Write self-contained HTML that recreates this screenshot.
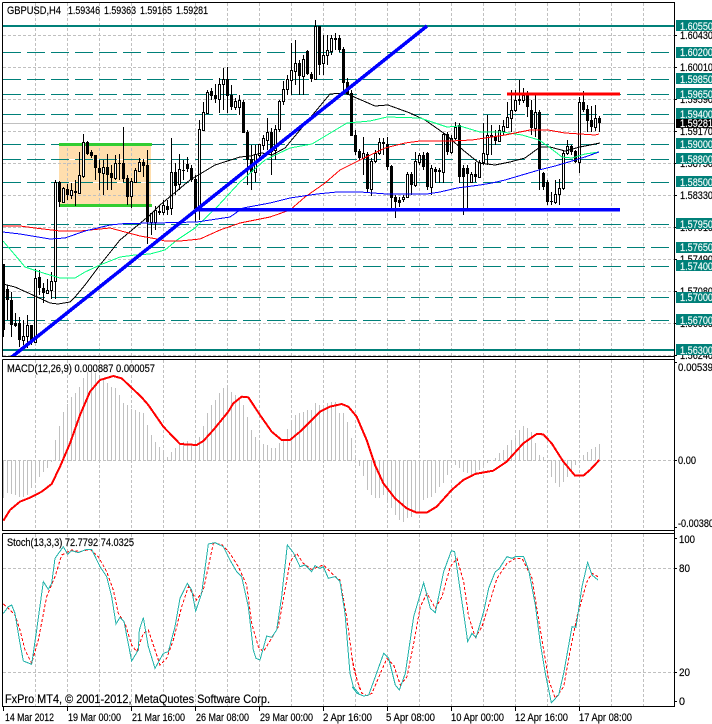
<!DOCTYPE html>
<html><head><meta charset="utf-8"><title>GBPUSD,H4</title>
<style>
html,body{margin:0;padding:0;background:#fff;width:712px;height:724px;overflow:hidden}
svg{display:block}
text{font-family:"Liberation Sans",sans-serif;font-size:11px;fill:#000;stroke:#000;stroke-width:.18px}
.l text{fill:#f2fbfa;stroke:#f2fbfa}
.g{stroke:#c0c0c0;stroke-width:1;stroke-dasharray:3 2;fill:none}
.t{stroke:#008079;stroke-width:1;stroke-dasharray:18 6}
.m{fill:none;stroke-width:1}
polyline{shape-rendering:crispEdges}
</style></head><body>
<svg width="712" height="724" viewBox="0 0 712 724" xmlns="http://www.w3.org/2000/svg">
<defs>
<clipPath id="c1"><rect x="3" y="3" width="671" height="353"/></clipPath>
<clipPath id="c2"><rect x="3" y="360" width="671" height="170"/></clipPath>
<clipPath id="c3"><rect x="3" y="534" width="671" height="172"/></clipPath>
</defs>
<rect width="712" height="724" fill="#fff"/>

<!-- main chart -->
<g clip-path="url(#c1)">
<rect x="59" y="144" width="92" height="61" fill="#ffdead"/>
<path d="M59 159.500H151M59 182.500H151" stroke="#fff" shape-rendering="crispEdges"/>
<g shape-rendering="crispEdges">
<path class="g" d="M35.500 3V356M67.500 3V356M99.500 3V356M131.500 3V356M163.500 3V356M195.500 3V356M227.500 3V356M259.500 3V356M291.500 3V356M323.500 3V356M355.500 3V356M387.500 3V356M419.500 3V356M451.500 3V356M483.500 3V356M515.500 3V356M547.500 3V356M579.500 3V356M611.500 3V356M643.500 3V356"/>
<path class="g" d="M3 35.500H674M3 67.500H674M3 99.500H674M3 131.500H674M3 163.500H674M3 195.500H674M3 227.500H674M3 259.500H674M3 291.500H674M3 323.500H674M3 355.500H674"/>
<path d="M3 123.500H674" stroke="#c0c0c0"/>
<path class="t" d="M3 52.500H674M3 79.500H674M3 94.500H674M3 114.500H674M3 144.500H674M3 159.500H674M3 182.500H674M3 224.500H674M3 247.500H674M3 266.500H674M3 297.500H674M3 320.500H674"/>
<path d="M3 26H674M3 350H674" stroke="#008079" stroke-width="2"/>
<path d="M59 144.500H152M59 205.500H152" stroke="#32cd32" stroke-width="3"/>
<!-- wicks -->
<path stroke="#000" stroke-width="1" d="M3.500 264V337M7.500 285V320M11.500 292V337M15.500 313V327M19.500 317V347M23.500 320V345M27.500 315V348M31.500 325V345M35.500 269V343M39.500 270V295M43.500 283V303M47.500 279V294M51.500 272V299M55.500 180V299M59.500 181V207M63.500 187V203M67.500 184V200M71.500 183V199M75.500 180V206M79.500 152V194M83.500 134V178M87.500 141V155M91.500 150V158M95.500 155V180M99.500 160V190M103.500 160V195M107.500 154V190M111.500 165V190M115.500 155V180M119.500 154V180M123.500 127V182M127.500 175V205M131.500 178V208M135.500 168V183M139.500 158V172M143.500 159V177M147.500 150V244M151.500 213V235M155.500 206V230M159.500 205V215M163.500 200V215M167.500 200V215M171.500 138V215M175.500 163V195M179.500 154V190M183.500 160V180M187.500 157V172M191.500 165V182M195.500 175V222M199.500 120V220M203.500 102V130M207.500 90V113M211.500 88V100M215.500 84V103M219.500 78V113M223.500 68V110M227.500 67V113M231.500 85V110M235.500 98V110M239.500 95V115M243.500 100V133M247.500 130V185M251.500 145V190M255.500 145V182M259.500 144V160M263.500 135V150M267.500 118V150M271.500 128V175M275.500 125V160M279.500 100V132M283.500 81V105M287.500 75V95M291.500 43V95M295.500 40V85M299.500 60V95M303.500 55V95M307.500 50V75M311.500 72V82M315.500 20V80M319.500 26V75M323.500 35V75M327.500 35V65M331.500 35V55M335.500 33V50M339.500 35V52M343.500 47V93M347.500 78V95M351.500 90V136M355.500 130V155M359.500 149V160M363.500 137V175M367.500 152V192M371.500 158V196M375.500 150V163M379.500 138V155M383.500 138V155M387.500 137V170M391.500 165V208M395.500 195V218M399.500 197V207M403.500 195V202M407.500 172V198M411.500 172V195M415.500 152V187M419.500 153V165M423.500 152V170M427.500 152V190M431.500 165V195M435.500 167V183M439.500 168V183M443.500 133V183M447.500 132V155M451.500 135V154M455.500 122V140M459.500 123V183M463.500 165V215M467.500 165V208M471.500 172V183M475.500 162V182M479.500 160V178M483.500 123V165M487.500 115V165M491.500 125V155M495.500 130V145M499.500 125V142M503.500 120V135M507.500 102V128M511.500 90V132M515.500 90V112M519.500 80V105M523.500 88V103M527.500 91V117M531.500 100V135M535.500 94V137M539.500 110V190M543.500 172V190M547.500 180V205M551.500 192V205M555.500 180V204M559.500 179V205M563.500 150V190M567.500 140V155M571.500 145V155M575.500 150V163M579.500 97V173M583.500 91V112M587.500 105V132M591.500 106V132M595.500 105V131M599.500 116V132"/>
<!-- bodies -->
<path stroke="#000" stroke-width="3" d="M3.500 264V330M7.500 289V300M11.500 300V325M15.500 323V326M19.500 323V340M23.500 336V341M27.500 325V337M31.500 325V342M35.500 278V343M39.500 277V288M43.500 288V293M47.500 290V294M51.500 281V291M55.500 182V282M59.500 182V202M63.500 188V203M67.500 189V195M71.500 190V196M75.500 191V193M79.500 175V194M83.500 142V177M87.500 142V154M91.500 152V156M95.500 155V168M99.500 168V173M103.500 167V174M107.500 167V175M111.500 173V178M115.500 163V179M119.500 163V164M123.500 163V179M127.500 178V197M131.500 181V197M135.500 170V183M139.500 162V172M143.500 162V166M147.500 165V222M151.500 213V223M155.500 210V223M159.500 211V213M163.500 205V213M167.500 206V210M171.500 172V209M175.500 172V186M179.500 169V185M183.500 170V171M187.500 164V169M191.500 168V180M195.500 179V209M199.500 129V210M203.500 112V131M207.500 92V114M211.500 91V96M215.500 95V99M219.500 84V100M223.500 79V85M227.500 79V96M231.500 95V107M235.500 101V108M239.500 100V108M243.500 102V133M247.500 132V160M251.500 159V172M255.500 154V173M259.500 144V156M263.500 138V146M267.500 132V141M271.500 132V152M275.500 129V151M279.500 101V130M283.500 89V102M287.500 79V90M291.500 70V81M295.500 63V72M299.500 63V76M303.500 59V77M307.500 51V74M311.500 74V79M315.500 26V80M319.500 26V65M323.500 55V64M327.500 50V56M331.500 38V52M335.500 38V40M339.500 38V50M343.500 49V83M347.500 82V94M351.500 93V136M355.500 135V152M359.500 151V158M363.500 153V159M367.500 154V189M371.500 161V190M375.500 153V162M379.500 142V154M383.500 142V144M387.500 144V167M391.500 166V198M395.500 197V202M399.500 200V203M403.500 197V200M407.500 174V198M411.500 174V185M415.500 161V186M419.500 155V163M423.500 155V167M427.500 153V187M431.500 168V188M435.500 169V172M439.500 170V172M443.500 134V173M447.500 134V152M451.500 138V153M455.500 127V139M459.500 125V177M463.500 168V177M467.500 168V174M471.500 174V183M475.500 174V177M479.500 162V178M483.500 153V163M487.500 135V155M491.500 135V137M495.500 136V141M499.500 130V142M503.500 126V132M507.500 117V128M511.500 110V119M515.500 100V111M519.500 99V101M523.500 95V101M527.500 93V107M531.500 110V128M535.500 112V129M539.500 112V169M543.500 173V187M547.500 182V202M551.500 201V202M555.500 194V203M559.500 188V195M563.500 153V189M567.500 146V154M571.500 146V152M575.500 151V162M579.500 102V163M583.500 102V110M587.500 109V121M591.500 120V127M595.500 118V128M599.500 118V123"/>
<!-- white candle interiors -->
<path stroke="#fff" stroke-width="1" d="M23.500 337V340M27.500 326V336M35.500 279V342M47.500 291V293M51.500 282V290M55.500 183V281M63.500 189V202M71.500 191V195M79.500 176V193M83.500 143V176M103.500 168V173M115.500 164V178M131.500 182V196M135.500 171V182M139.500 163V171M151.500 214V222M155.500 211V222M163.500 206V212M171.500 173V208M179.500 170V184M199.500 130V209M203.500 113V130M207.500 93V113M219.500 85V99M223.500 80V84M235.500 102V107M239.500 101V107M255.500 155V172M259.500 145V155M263.500 139V145M267.500 133V140M275.500 130V150M279.500 102V129M283.500 90V101M287.500 80V89M291.500 71V80M295.500 64V71M303.500 60V76M315.500 27V79M323.500 56V63M327.500 51V55M331.500 39V51M363.500 154V158M371.500 162V189M375.500 154V161M379.500 143V153M403.500 198V199M407.500 175V197M415.500 162V185M419.500 156V162M431.500 169V187M443.500 135V172M451.500 139V152M455.500 128V138M471.500 175V182M479.500 163V177M483.500 154V162M487.500 136V154M499.500 131V141M503.500 127V131M507.500 118V127M511.500 111V118M515.500 101V110M523.500 96V100M535.500 113V128M555.500 195V202M559.500 189V194M563.500 154V188M567.500 147V153M579.500 103V162M595.500 119V127"/>
</g>
<!-- moving averages -->
<polyline class="m" stroke="#000" points="3,284 15,287 35,296 50,303 58,304 70,302 75,297 85,285 100,265 120,240 150,215 160,205 190,180 215,165 240,157 250,156 262,153 272,155 285,148 300,130 330,94 345,93 375,106 388,105 410,113 425,120 445,134 463,150 479,163 495,165 510,162 525,158 540,147 550,147 565,151 580,147 590,145 600,143"/>
<polyline class="m" stroke="#00ff7f" points="3,241 15,255 25,267 40,272 60,278 75,278 85,272 100,265 120,257 135,255 150,254 165,250 177,240 195,228 217,207 240,182 265,160 290,148 312,144 347,123 370,121 387,117 420,118 447,127 460,126 480,132 502,132 522,135 539,140 549,147 562,157 572,158 585,154 599,152"/>
<polyline class="m" stroke="#f00" points="3,226 20,226 35,228 60,231 80,231 110,228 125,232 140,236 157,239 165,241 180,241 200,239 220,230 240,223 270,217 290,210 305,197 325,183 340,170 360,160 385,148 405,143 420,141 450,141 472,140 505,135 530,130 548,130 565,133 580,134 595,135 599,134"/>
<polyline class="m" stroke="#00f" points="3,232 20,234 50,239 65,238 85,231 110,225 125,223.500 155,223 197,222 230,217 243,208 270,203 290,198 317,194 337,192 360,192 373,193 387,194 427,194 440,192 457,188 480,185 492,183 505,180 522,175 539,170 555,166 572,161 585,157 599,152"/>
<!-- trend lines -->
<path d="M8 360L427 26" stroke="#00f" stroke-width="3.500" fill="none" shape-rendering="crispEdges"/>
<path d="M195 209.500H620" stroke="#00f" stroke-width="3.500" shape-rendering="crispEdges"/>
<path d="M507 94H620" stroke="#f00" stroke-width="3" shape-rendering="crispEdges"/>
</g>

<!-- MACD -->
<g clip-path="url(#c2)">
<g shape-rendering="crispEdges">
<path class="g" d="M35.500 360V530M67.500 360V530M99.500 360V530M131.500 360V530M163.500 360V530M195.500 360V530M227.500 360V530M259.500 360V530M291.500 360V530M323.500 360V530M355.500 360V530M387.500 360V530M419.500 360V530M451.500 360V530M483.500 360V530M515.500 360V530M547.500 360V530M579.500 360V530M611.500 360V530M643.500 360V530"/>
<path class="g" d="M3 460.500H674"/>
<path stroke="#c0c0c0" stroke-width="1" d="M3.500 460V498M7.500 460V493M11.500 460V494M15.500 460V495M19.500 460V497M23.500 460V497M27.500 460V495M31.500 460V488M35.500 460V483M39.500 460V477M43.500 460V472M47.500 460V468M51.500 460V462M55.500 461V440M59.500 461V426M63.500 461V412M67.500 461V404M71.500 461V397M75.500 461V393M79.500 461V387M83.500 461V378M87.500 461V372M91.500 461V368M95.500 461V373M99.500 461V375M103.500 461V380M107.500 461V383M111.500 461V387M115.500 461V388M119.500 461V395M123.500 461V403M127.500 461V405M131.500 461V409M135.500 461V410M139.500 461V412M143.500 461V413M147.500 461V425M151.500 461V435M155.500 461V442M159.500 461V447M163.500 461V452M167.500 461V457M171.500 461V452M175.500 461V448M179.500 461V445M183.500 461V442M187.500 461V441M191.500 461V445M195.500 461V442M199.500 461V437M203.500 461V426M207.500 461V413M211.500 461V405M215.500 461V400M219.500 461V393M223.500 461V388M227.500 461V387M231.500 461V392M235.500 461V395M239.500 461V400M243.500 461V405M247.500 461V417M251.500 461V430M255.500 461V437M259.500 461V443M263.500 461V444M267.500 461V445M271.500 461V448M275.500 461V448M279.500 461V443M283.500 461V441M287.500 461V429M291.500 461V422M295.500 461V415M299.500 461V413M303.500 461V412M307.500 461V410M311.500 461V410M315.500 461V403M319.500 461V405M323.500 461V405M327.500 461V403M331.500 461V402M335.500 461V402M339.500 461V413M343.500 461V413M347.500 461V422M351.500 461V438M355.500 461V455M359.500 460V466M363.500 460V476M367.500 460V490M371.500 460V495M375.500 460V498M379.500 460V498M383.500 460V495M387.500 460V503M391.500 460V508M395.500 460V515M399.500 460V520M403.500 460V522M407.500 460V518M411.500 460V517M415.500 460V512M419.500 460V512M423.500 460V500M427.500 460V498M431.500 460V497M435.500 460V493M439.500 460V487M443.500 460V483M447.500 460V475M451.500 460V463M455.500 460V465M459.500 460V468M463.500 460V472M467.500 460V473M471.500 460V475M475.500 460V473M479.500 460V470M483.500 460V465M487.500 460V463M495.500 461V458M499.500 461V453M503.500 461V450M507.500 461V445M511.500 461V440M515.500 461V435M519.500 461V430M523.500 461V426M527.500 461V428M531.500 461V432M535.500 461V443M539.500 461V455M543.500 461V457M551.500 460V477M555.500 460V483M559.500 460V487M563.500 460V482M567.500 460V477M571.500 460V472M575.500 460V465M579.500 460V461M583.500 461V455M587.500 461V452M591.500 461V449M595.500 461V447M599.500 461V444"/>
</g>
<g transform="translate(0 355) scale(.33333)" fill="none" stroke="#f00" stroke-width="6" stroke-linejoin="round"><polyline points="10,497 30,465 60,440 90,428 125,410 155,387 180,335 210,265 240,180 270,110 300,75 340,63 365,70 425,127 445,150 490,215 540,267 590,270 610,258 640,225 685,170 700,145 725,125 745,127 780,180 815,230 845,255 870,255 900,230"/></g>
<g transform="translate(300 355) scale(.33333)" fill="none" stroke="#f00" stroke-width="6" stroke-linejoin="round"><polyline points="0,230 60,170 90,155 125,147 145,155 170,185 200,255 225,330 250,385 285,430 320,460 350,473 380,473 410,455 455,405 490,375 525,357 580,347 620,320 670,265 710,237 730,238 755,265 790,320 825,362 850,362 870,345 898,315"/></g>
</g>

<!-- Stochastic -->
<g clip-path="url(#c3)">
<g shape-rendering="crispEdges">
<path class="g" d="M35.500 534V706M67.500 534V706M99.500 534V706M131.500 534V706M163.500 534V706M195.500 534V706M227.500 534V706M259.500 534V706M291.500 534V706M323.500 534V706M355.500 534V706M387.500 534V706M419.500 534V706M451.500 534V706M483.500 534V706M515.500 534V706M547.500 534V706M579.500 534V706M611.500 534V706M643.500 534V706"/>
<path class="g" d="M3 568.500H674M3 672.500H674"/>
</g>
<g transform="translate(0 530) scale(.33333)" fill="none">
<polyline stroke="#f00" stroke-width="3" stroke-dasharray="9 6" points="10,222 25,235 45,255 60,300 75,360 95,400 115,330 140,200 165,140 185,75 215,60 240,65 270,58 295,80 320,125 340,180 355,250 375,280 395,345 410,365 430,310 445,300 465,360 480,405 500,385 520,330 545,230 565,170 590,210 610,180 640,40 665,43 690,70 715,110 740,165 755,280 775,350 790,365 815,325 835,290 855,180 870,95 890,70 910,100 935,118 970,105 1000,135 1020,150 1040,260 1060,410 1080,480"/>
<polyline stroke="#20b2aa" stroke-width="3" points="10,250 25,230 35,225 45,250 60,340 70,393 95,403 110,300 130,155 145,178 155,160 165,85 190,50 203,73 215,62 235,68 260,58 275,58 300,110 320,140 335,200 348,282 360,262 372,275 395,393 415,360 418,300 430,263 445,350 465,415 490,370 505,365 525,290 540,205 562,160 575,180 587,243 605,190 625,42 645,38 670,50 690,90 710,125 725,140 745,230 760,360 768,385 780,390 800,318 815,322 830,300 845,200 862,45 880,68 900,110 915,105 935,125 945,107 960,115 970,110 985,145 1005,140 1020,155 1035,250 1050,430 1060,470 1080,495"/>
</g>
<g transform="translate(352 530) scale(.33333)" fill="none">
<polyline stroke="#f00" stroke-width="3" stroke-dasharray="9 6" points="0,385 15,450 30,490 45,497 60,490 85,430 105,385 125,405 145,465 165,440 185,340 205,230 225,190 250,235 270,200 295,110 315,85 335,155 350,260 370,322 390,290 415,210 435,145 465,100 490,85 510,85 540,145 565,300 590,450 610,505 635,470 655,360 675,260 705,155 720,130 738,140"/>
<polyline stroke="#20b2aa" stroke-width="3" points="0,470 15,490 35,498 50,495 70,440 95,370 110,385 130,465 142,480 160,430 185,260 215,158 235,235 250,248 275,125 298,62 308,65 320,150 335,250 347,335 360,310 372,323 395,245 410,175 430,125 440,118 465,80 480,85 490,80 515,80 530,120 550,225 565,340 580,430 598,518 620,495 635,430 660,290 672,292 690,170 707,97 720,135 738,150"/>
</g>
</g>

<!-- frames -->
<g fill="none" stroke="#000" stroke-width="1" shape-rendering="crispEdges">
<path d="M2.500 2.500H674.500V707M2.500 2.500V356.500H674M2.500 359.500H674M2.500 359.500V530.500H674M2.500 533.500H674M2.500 533.500V706.500H674"/>
<path d="M674 35.500H677M674 67.500H677M674 99.500H677M674 131.500H677M674 163.500H677M674 195.500H677M674 227.500H677M674 259.500H677M674 291.500H677M674 323.500H677M674 355.500H677M674 362.500H677M674 460.500H677M674 527.500H677M674 538.500H677M674 568.500H677M674 672.500H677M674 701.500H677"/>
<path d="M3.500 707V711M67.500 707V711M131.500 707V711M195.500 707V711M259.500 707V711M323.500 707V711M387.500 707V711M451.500 707V711M515.500 707V711M579.500 707V711"/>
</g>

<!-- header labels -->
<text x="7" y="14" textLength="54" lengthAdjust="spacingAndGlyphs">GBPUSD,H4</text>
<text x="68" y="14" textLength="32" lengthAdjust="spacingAndGlyphs">1.59346</text>
<text x="104" y="14" textLength="32" lengthAdjust="spacingAndGlyphs">1.59363</text>
<text x="140" y="14" textLength="32" lengthAdjust="spacingAndGlyphs">1.59165</text>
<text x="176" y="14" textLength="32" lengthAdjust="spacingAndGlyphs">1.59281</text>
<text x="7" y="372" textLength="148" lengthAdjust="spacingAndGlyphs">MACD(12,26,9) 0.000887 0.000057</text>
<text x="7" y="546" textLength="127" lengthAdjust="spacingAndGlyphs">Stoch(13,3,3) 72.7792 74.0325</text>
<text x="5" y="703" textLength="265" lengthAdjust="spacingAndGlyphs" style="font-size:12px">FxPro MT4, © 2001-2012, MetaQuotes Software Corp.</text>

<!-- price axis -->
<g>
<text x="680" y="39" textLength="33" lengthAdjust="spacingAndGlyphs">1.60430</text>
<text x="680" y="71" textLength="33" lengthAdjust="spacingAndGlyphs">1.60010</text>
<text x="680" y="103" textLength="33" lengthAdjust="spacingAndGlyphs">1.59590</text>
<text x="680" y="135" textLength="33" lengthAdjust="spacingAndGlyphs">1.59170</text>
<text x="680" y="167" textLength="33" lengthAdjust="spacingAndGlyphs">1.58750</text>
<text x="680" y="199" textLength="33" lengthAdjust="spacingAndGlyphs">1.58330</text>
<text x="680" y="231" textLength="33" lengthAdjust="spacingAndGlyphs">1.57910</text>
<text x="680" y="263" textLength="33" lengthAdjust="spacingAndGlyphs">1.57490</text>
<text x="680" y="295" textLength="33" lengthAdjust="spacingAndGlyphs">1.57080</text>
<text x="680" y="327" textLength="33" lengthAdjust="spacingAndGlyphs">1.56660</text>
<text x="680" y="359" textLength="33" lengthAdjust="spacingAndGlyphs">1.56240</text>
</g>
<g fill="#008079" shape-rendering="crispEdges">
<rect x="676" y="20" width="36" height="11"/><rect x="676" y="47" width="36" height="11"/>
<rect x="676" y="73" width="36" height="11"/><rect x="676" y="88" width="36" height="11"/>
<rect x="676" y="108" width="36" height="11"/><rect x="676" y="138" width="36" height="11"/>
<rect x="676" y="153" width="36" height="11"/><rect x="676" y="176" width="36" height="11"/>
<rect x="676" y="218" width="36" height="11"/><rect x="676" y="242" width="36" height="11"/>
<rect x="676" y="260" width="36" height="11"/><rect x="676" y="292" width="36" height="11"/>
<rect x="676" y="314" width="36" height="11"/><rect x="676" y="344" width="36" height="11"/>
</g>
<g class="l">
<text x="680" y="30" textLength="33" lengthAdjust="spacingAndGlyphs">1.60550</text>
<text x="680" y="56" textLength="33" lengthAdjust="spacingAndGlyphs">1.60200</text>
<text x="680" y="83" textLength="33" lengthAdjust="spacingAndGlyphs">1.59850</text>
<text x="680" y="98" textLength="33" lengthAdjust="spacingAndGlyphs">1.59650</text>
<text x="680" y="118" textLength="33" lengthAdjust="spacingAndGlyphs">1.59400</text>
<text x="680" y="148" textLength="33" lengthAdjust="spacingAndGlyphs">1.59000</text>
<text x="680" y="163" textLength="33" lengthAdjust="spacingAndGlyphs">1.58800</text>
<text x="680" y="186" textLength="33" lengthAdjust="spacingAndGlyphs">1.58500</text>
<text x="680" y="228" textLength="33" lengthAdjust="spacingAndGlyphs">1.57950</text>
<text x="680" y="251" textLength="33" lengthAdjust="spacingAndGlyphs">1.57650</text>
<text x="680" y="270" textLength="33" lengthAdjust="spacingAndGlyphs">1.57400</text>
<text x="680" y="301" textLength="33" lengthAdjust="spacingAndGlyphs">1.57000</text>
<text x="680" y="324" textLength="33" lengthAdjust="spacingAndGlyphs">1.56700</text>
<text x="680" y="354" textLength="33" lengthAdjust="spacingAndGlyphs">1.56300</text>
</g>
<rect x="676" y="119" width="36" height="9" fill="#000" shape-rendering="crispEdges"/>
<text x="680" y="127" textLength="33" lengthAdjust="spacingAndGlyphs" style="fill:#fff;stroke:#fff">1.59281</text>

<!-- indicator axes -->
<text x="678" y="371" textLength="35" lengthAdjust="spacingAndGlyphs">0.00539</text>
<text x="678" y="464" textLength="18" lengthAdjust="spacingAndGlyphs">0.00</text>
<text x="678" y="527" textLength="36" lengthAdjust="spacingAndGlyphs">-0.00380</text>
<text x="679" y="543" textLength="16" lengthAdjust="spacingAndGlyphs">100</text>
<text x="679" y="572" textLength="11" lengthAdjust="spacingAndGlyphs">80</text>
<text x="679" y="676" textLength="11" lengthAdjust="spacingAndGlyphs">20</text>
<text x="679" y="705" textLength="6" lengthAdjust="spacingAndGlyphs">0</text>

<!-- time axis -->
<text x="5" y="721" textLength="49" lengthAdjust="spacingAndGlyphs">14 Mar 2012</text>
<text x="68" y="721" textLength="53" lengthAdjust="spacingAndGlyphs">19 Mar 00:00</text>
<text x="132" y="721" textLength="53" lengthAdjust="spacingAndGlyphs">21 Mar 16:00</text>
<text x="196" y="721" textLength="53" lengthAdjust="spacingAndGlyphs">26 Mar 08:00</text>
<text x="260" y="721" textLength="53" lengthAdjust="spacingAndGlyphs">29 Mar 00:00</text>
<text x="323" y="721" textLength="49" lengthAdjust="spacingAndGlyphs">2 Apr 16:00</text>
<text x="386" y="721" textLength="49" lengthAdjust="spacingAndGlyphs">5 Apr 08:00</text>
<text x="451" y="721" textLength="53" lengthAdjust="spacingAndGlyphs">10 Apr 00:00</text>
<text x="515" y="721" textLength="53" lengthAdjust="spacingAndGlyphs">12 Apr 16:00</text>
<text x="579" y="721" textLength="53" lengthAdjust="spacingAndGlyphs">17 Apr 08:00</text>
</svg>
</body></html>
